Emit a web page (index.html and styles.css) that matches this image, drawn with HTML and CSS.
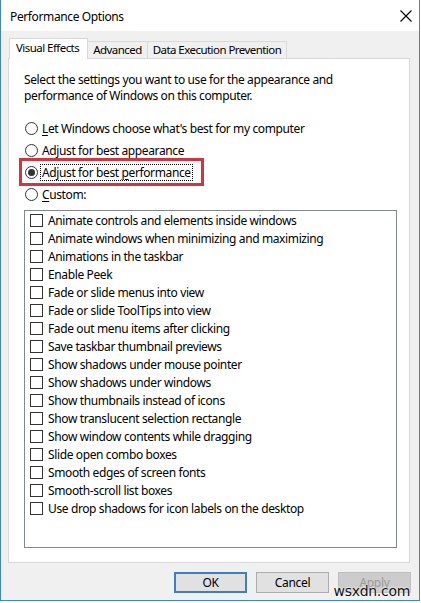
FILE: index.html
```html
<!DOCTYPE html>
<html>
<head>
<meta charset="utf-8">
<link rel="stylesheet" href="styles.css">
</head>
<body>
<div class="window">
  <div class="titlebar">
    <span class="title">Performance Options</span>
    <svg class="close" width="12" height="12" viewBox="0 0 12 12"><path d="M0.5 0.5 L11.5 11.5 M11.5 0.5 L0.5 11.5" stroke="#000" stroke-width="1.1" fill="none"/></svg>
  </div>
  <div class="content">
    <div class="tabs">
      <div class="tab active">Visual Effects</div>
      <div class="tab">Advanced</div>
      <div class="tab">Data Execution Prevention</div>
    </div>
    <div class="panel">
      <p class="desc">Select the settings you want to use for the appearance and<br>performance of Windows on this computer.</p>
      <div class="radios">
        <div class="radio-row"><span class="radio"></span><span class="label"><u>L</u>et Windows choose what's best for my computer</span></div>
        <div class="radio-row"><span class="radio"></span><span class="label">Adjust for best appearance</span></div>
        <div class="radio-row highlighted"><span class="radio checked"></span><span class="label focus">Adjust for best <u>p</u>erformance</span><span class="redbox"></span></div>
        <div class="radio-row"><span class="radio"></span><span class="label"><u>C</u>ustom:</span></div>
      </div>
      <div class="listbox">
        <div class="check-row"><span class="check"></span>Animate controls and elements inside windows</div>
        <div class="check-row"><span class="check"></span>Animate windows when minimizing and maximizing</div>
        <div class="check-row"><span class="check"></span>Animations in the taskbar</div>
        <div class="check-row"><span class="check"></span>Enable Peek</div>
        <div class="check-row"><span class="check"></span>Fade or slide menus into view</div>
        <div class="check-row"><span class="check"></span>Fade or slide ToolTips into view</div>
        <div class="check-row"><span class="check"></span>Fade out menu items after clicking</div>
        <div class="check-row"><span class="check"></span>Save taskbar thumbnail previews</div>
        <div class="check-row"><span class="check"></span>Show shadows under mouse pointer</div>
        <div class="check-row"><span class="check"></span>Show shadows under windows</div>
        <div class="check-row"><span class="check"></span>Show thumbnails instead of icons</div>
        <div class="check-row"><span class="check"></span>Show translucent selection rectangle</div>
        <div class="check-row"><span class="check"></span>Show window contents while dragging</div>
        <div class="check-row"><span class="check"></span>Slide open combo boxes</div>
        <div class="check-row"><span class="check"></span>Smooth edges of screen fonts</div>
        <div class="check-row"><span class="check"></span>Smooth-scroll list boxes</div>
        <div class="check-row"><span class="check"></span>Use drop shadows for icon labels on the desktop</div>
      </div>
    </div>
    <div class="footer">
      <button class="btn default">OK</button>
      <button class="btn">Cancel</button>
      <button class="btn disabled">Apply</button>
    </div>
  </div>
  <span class="watermark">wsxdn.com</span>
</div>
</body>
</html>
```
FILE: styles.css
```css
html, body {
  margin: 0;
  padding: 0;
  background: #ffffff;
}
body {
  font-family: "Noto Sans", "Open Sans", sans-serif;
  font-size: 12px;
  letter-spacing: -0.38px;
  color: #000;
}
.window {
  position: relative;
  box-sizing: border-box;
  width: 420px;
  height: 601px;
  border: 1px solid #3c86c9;
  border-top: none;
  background: #f0f0f0;
  display: flex;
  flex-direction: column;
}
.titlebar {
  height: 31px;
  flex: none;
  background: #fff;
  display: flex;
  align-items: center;
  justify-content: space-between;
  padding: 0 7px 0 9px;
}
.title {
  font-size: 12px;
  margin-top: 1px;
}
.content {
  padding: 7px 7px 0 7px;
  display: flex;
  flex-direction: column;
}
.tabs {
  display: flex;
  align-items: flex-end;
  height: 20px;
  padding-left: 1px;
}
.tab {
  box-sizing: border-box;
  height: 17px;
  line-height: 15px;
  border: 1px solid #d9d9d9;
  border-bottom: none;
  border-left: none;
  padding: 0 5px;
  background: #f0f0f0;
  font-size: 11.5px;
  letter-spacing: -0.55px;
  white-space: nowrap;
}
.tab.active {
  height: 21px;
  line-height: 18px;
  border-left: 1px solid #d9d9d9;
  background: #fff;
  margin-bottom: -1px;
  position: relative;
  z-index: 1;
  padding: 0 8px 0 6px;
}
.panel {
  box-sizing: border-box;
  width: 402px;
  height: 505px;
  background: #fff;
  border: 1px solid #d9d9d9;
  padding: 13px 0 0 15px;
  display: flex;
  flex-direction: column;
}
.desc {
  margin: 0;
  line-height: 16px;
}
.radios {
  margin-top: 13px;
  display: flex;
  flex-direction: column;
}
.radio-row {
  position: relative;
  height: 22px;
  display: flex;
  align-items: center;
}
.radio {
  box-sizing: border-box;
  width: 13px;
  height: 13px;
  border: 1px solid #333;
  border-radius: 50%;
  margin-left: 1px;
  margin-right: 2px;
  display: flex;
  align-items: center;
  justify-content: center;
  flex: none;
}
.radio.checked::after {
  content: "";
  width: 7px;
  height: 7px;
  border-radius: 50%;
  background: #333;
}
.label {
  padding: 0 1px;
  line-height: 15px;
  border: 1px dotted transparent;
}
.label.focus {
  border-color: #000;
}
.label u {
  text-decoration-thickness: 1px;
  text-underline-offset: 2px;
}
.redbox {
  position: absolute;
  left: -5px;
  top: -3px;
  width: 185px;
  height: 28px;
  box-sizing: border-box;
  border: 3px solid #d3353e;
  pointer-events: none;
}
.listbox {
  box-sizing: border-box;
  margin-top: 5px;
  width: 373px;
  height: 338px;
  border: 1px solid #828790;
  padding: 0 0 0 5px;
  display: flex;
  flex-direction: column;
}
.check-row {
  height: 18px;
  display: flex;
  align-items: center;
}
.check {
  box-sizing: border-box;
  width: 13px;
  height: 13px;
  border: 1px solid #333;
  margin-right: 5px;
  flex: none;
}
.footer {
  display: flex;
  justify-content: flex-end;
  gap: 9px;
  margin-top: 9px;
  padding-right: 1px;
}
.btn {
  box-sizing: border-box;
  width: 73px;
  height: 21px;
  padding: 0;
  font-family: inherit;
  font-size: 12px;
  letter-spacing: -0.3px;
  color: #000;
  background: #e1e1e1;
  border: 1px solid #adadad;
  border-radius: 0;
  line-height: 17px;
}
.btn.default {
  border: 2px solid #3d7fc2;
}
.btn.disabled {
  background: #cccccc;
  border-color: #bfbfbf;
  color: #9a9a9a;
}
.watermark {
  position: absolute;
  right: 9px;
  bottom: 1px;
  font-family: "DejaVu Sans", sans-serif;
  font-size: 14px;
  color: #111;
  letter-spacing: -0.3px;
  text-shadow: 0 0 2px #fff, 0 0 2px #fff;
}
```
